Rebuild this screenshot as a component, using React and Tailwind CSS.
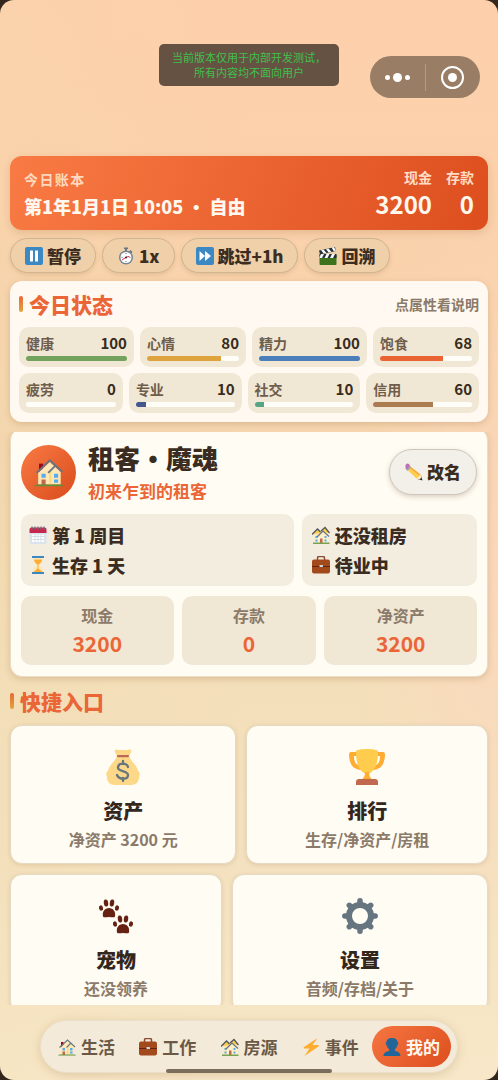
import { useState } from 'react';

const quickStats = [
  [
    { label: '健康', value: 100, color: 'bg-[#72a25b]' },
    { label: '心情', value: 80, color: 'bg-[#dfa33d]' },
    { label: '精力', value: 100, color: 'bg-[#4a7fb9]' },
    { label: '饱食', value: 68, color: 'bg-[#ea6332]' },
  ],
  [
    { label: '疲劳', value: 0, color: 'bg-[#8a7a68]' },
    { label: '专业', value: 10, color: 'bg-[#43588c]' },
    { label: '社交', value: 10, color: 'bg-[#55a583]' },
    { label: '信用', value: 60, color: 'bg-[#ab7c50]' },
  ],
];

const money = [
  { label: '现金', value: 3200 },
  { label: '存款', value: 0 },
  { label: '净资产', value: 3200 },
];

const entries = [
  [
    { icon: MoneyBag, title: '资产', note: '净资产 3200 元' },
    { icon: Trophy, title: '排行', note: '生存/净资产/房租' },
  ],
  [
    { icon: Paws, title: '宠物', note: '还没领养' },
    { icon: Gear, title: '设置', note: '音频/存档/关于' },
  ],
];

const tabs = [
  { icon: House, label: '生活' },
  { icon: Briefcase, label: '工作' },
  { icon: Houses, label: '房源' },
  { icon: Bolt, label: '事件' },
  { icon: Person, label: '我的' },
];

function Icon({ className = 'size-[18px]', children }) {
  return (
    <svg viewBox="0 0 36 36" className={`shrink-0 ${className}`} aria-hidden="true">
      {children}
    </svg>
  );
}

function Pause(props) {
  return (
    <Icon {...props}>
      <rect x="0" y="0" width="36" height="36" rx="4" fill="#3b88c3" />
      <rect x="10" y="7" width="6" height="22" rx="1" fill="#fff" />
      <rect x="20" y="7" width="6" height="22" rx="1" fill="#fff" />
    </Icon>
  );
}

function Forward(props) {
  return (
    <Icon {...props}>
      <rect x="0" y="0" width="36" height="36" rx="4" fill="#3b88c3" />
      <path d="M7 8l11 10L7 28zM18 8l12 10-12 10z" fill="#fff" />
    </Icon>
  );
}

function Stopwatch(props) {
  return (
    <Icon {...props}>
      <path d="M14 1h8v3h-2v4h-4V4h-2z" fill="#66757f" />
      <path d="M27 6l4 4-3 3-4-4z" fill="#66757f" />
      <circle cx="18" cy="21" r="14" fill="#758592" />
      <circle cx="18" cy="21" r="11" fill="#fff" />
      <path d="M18 12v2M18 28v2M9 21h2M25 21h2" stroke="#66757f" strokeWidth="2" />
      <path d="M10 26l9-6 6-1" fill="none" stroke="#dd2e44" strokeWidth="2" />
      <circle cx="18" cy="21" r="2" fill="#292f33" />
    </Icon>
  );
}

function Clapper(props) {
  return (
    <Icon {...props}>
      <path d="M1 16h34v18a2 2 0 0 1-2 2H3a2 2 0 0 1-2-2z" fill="#3e721d" />
      <path d="M1 14h34v8H1zM0 7L32 0l2 8L2 15z" fill="#292f33" />
      <path d="M4 14h6l-4 8H1v-2zM15 14h6l-4 8h-6zM26 14h6l-4 8h-6zM4 6l5-1 6 7-6 1zM14 4l5-1 6 7-6 1zM25 1l5-1 4 7-4 2z" fill="#f5f8fa" />
    </Icon>
  );
}

function House(props) {
  return (
    <Icon {...props}>
      <path d="M6 8h5v10H6z" fill="#a0041e" />
      <path d="M19 6L5 19v14h27V18z" fill="#ffe8b6" />
      <path d="M18 20v13h3V17z" fill="#ffd983" />
      <path d="M3 19L19 4l15 14" fill="none" stroke="#66757f" strokeWidth="2.2" />
      <path d="M17 19l9-9" fill="none" stroke="#66757f" strokeWidth="2.2" />
      <path d="M9 20h5v5H9zM24 20h5v5h-5zM24 27h5v4h-5z" fill="#55acee" />
      <path d="M9 27h5v7H9z" fill="#c1694f" />
      <path d="M0 35q1-2 4-2h28q3 0 4 2z" fill="#5c913b" />
    </Icon>
  );
}

function Houses(props) {
  return (
    <Icon {...props}>
      <path d="M5 13h13v18H5zM21 10h11v12H21z" fill="#ffe8b6" />
      <path d="M2 16l9-10 9 8zM18 12l8-9 9 11z" fill="#ffcc4d" />
      <path d="M0 17L11 6l6 6M18 10l8-7 9 11" fill="none" stroke="#4c565e" strokeWidth="2.5" />
      <path d="M7 20h4v4H7zM7 27h4v4H7z" fill="#55acee" />
      <path d="M22 11L12 21v13h21V20z" fill="#fff0c9" />
      <path d="M10 22l12-12 12 11" fill="none" stroke="#66757f" strokeWidth="2.5" />
      <path d="M25 20h4v4h-4zM25 27h4v4h-4z" fill="#55acee" />
      <path d="M16 25h5v9h-5z" fill="#c1694f" />
      <path d="M2 33h33v3H2z" fill="#77a353" />
    </Icon>
  );
}

function Briefcase(props) {
  return (
    <Icon {...props}>
      <path d="M11 8V4a3 3 0 0 1 3-3h8a3 3 0 0 1 3 3v4" fill="none" stroke="#8a4b38" strokeWidth="3" />
      <rect x="0" y="7" width="36" height="28" rx="4" fill="#a34a1c" />
      <path d="M0 20h36v2H0z" fill="#662113" />
      <rect x="15" y="18" width="7" height="4" rx="1" fill="#ccd6dd" />
    </Icon>
  );
}

function Bolt(props) {
  return (
    <Icon {...props}>
      <path d="M31 0L4 18c-1 1-1 3 1 3h10L5 36l28-19c1-1 1-3-1-3H21z" fill="#ffac33" />
    </Icon>
  );
}

function Person(props) {
  return (
    <Icon {...props}>
      <path d="M24 26v-4c3-2 4-5 5-8 2-1 2-5 0-6 0-5-5-8-11-8S7 3 7 8c-2 1-2 5 0 6 1 3 2 6 5 8v4c-6 1-11 4-11 10h34c0-6-5-9-11-10z" fill="#226699" />
    </Icon>
  );
}

function Calendar(props) {
  return (
    <Icon {...props}>
      <path d="M1 11h34v21a4 4 0 0 1-4 4H5a4 4 0 0 1-4-4z" fill="#dbe4ec" />
      <path d="M5 3h26a4 4 0 0 1 4 4v7H1V7a4 4 0 0 1 4-4z" fill="#c5284c" />
      <path d="M6 17h24v15H6z" fill="#fff" />
      <path d="M12 16v17M18 16v17M24 16v17M5 21h26M5 27h26" stroke="#ccd6dd" strokeWidth="1.5" />
      <path d="M6 1v6M12 1v6M18 1v6M24 1v6M30 1v6" stroke="#66757f" strokeWidth="2.5" />
    </Icon>
  );
}

function Hourglass(props) {
  return (
    <Icon {...props}>
      <path d="M8 3h20c0 9-3 12-8 15 5 3 8 6 8 15H8c0-9 3-12 8-15C11 15 8 12 8 3z" fill="#ffe8b6" />
      <path d="M10 7h16c-1 6-4 8-7 10v8l8 7H9l8-7v-8c-3-2-6-4-7-10z" fill="#ffac33" />
      <path d="M6 0h24v4H6zM6 32h24v4H6z" fill="#3b88c3" />
    </Icon>
  );
}

function Pencil(props) {
  return (
    <Icon {...props}>
      <path d="M35 35l-3-10-7 7z" fill="#292f33" />
      <path d="M33 29l-3-7-8 8 7 3z" fill="#ffe8b6" />
      <path d="M9 6l22 17-8 8L3 12z" fill="#ffcc4d" />
      <path d="M9 6l22 17-2 2L7 8z" fill="#f4a93a" />
      <path d="M8 4l4 5-7 7-4-5z" fill="#99aab5" />
      <path d="M1 7c-1-4 3-8 7-5l2 4-7 7-2-3z" fill="#bf6fb5" />
    </Icon>
  );
}

function MoneyBag(props) {
  return (
    <Icon {...props}>
      <path d="M12 7c-1-2-3-4-2-6 1-1 3 0 4 0h8c1 0 3-1 4 0 1 2-1 4-2 6z" fill="#fdd888" />
      <path d="M12 7h12c2 6 8 9 9 15 2 1 2 4 1 6 0 5-3 8-8 8H10c-5 0-8-3-8-8-1-2-1-5 1-6 1-6 7-9 9-15z" fill="#fdd888" />
      <rect x="12" y="6" width="12" height="2.2" rx="1" fill="#bf6952" />
      <path d="M23 18c-1-4-9-5-10 0-1 5 10 3 10 8 0 5-9 5-11 0M18 12v3M18 29v3" fill="none" stroke="#67757f" strokeWidth="2.3" strokeLinecap="round" />
    </Icon>
  );
}

function Trophy(props) {
  return (
    <Icon {...props}>
      <path d="M8 3H2C0 3 0 5 0 7c1 8 3 13 12 14v-4c-6-1-7-5-7-10h4zM28 3h6c2 0 2 2 2 4-1 8-3 13-12 14v-4c6-1 7-5 7-10h-4z" fill="#ffac33" />
      <path d="M7 2c0-1 5-2 11-2s11 1 11 2c0 13-3 19-8 22h-6C10 21 7 15 7 2z" fill="#ffcc4d" />
      <path d="M16 23h4c0 4 1 6 4 8H12c3-2 4-4 4-8z" fill="#ffac33" />
      <path d="M10 30h16a3 3 0 0 1 3 3v3H7v-3a3 3 0 0 1 3-3z" fill="#c1694f" />
    </Icon>
  );
}

function Paw() {
  return (
    <>
      <ellipse cx="2" cy="9" rx="2" ry="2.7" transform="rotate(-15 2 9)" />
      <ellipse cx="7" cy="4" rx="2.2" ry="3.6" transform="rotate(-8 7 4)" />
      <ellipse cx="13" cy="4" rx="2.2" ry="3.6" transform="rotate(8 13 4)" />
      <ellipse cx="18" cy="9" rx="2" ry="2.7" transform="rotate(15 18 9)" />
      <path d="M4 17.500c-1-5 2-8.500 6-8.500s7 3.500 6 8.500c-1 1.500-3 .5-6 .5s-5 1-6-.5z" />
    </>
  );
}

function Paws(props) {
  return (
    <Icon {...props}>
      <g fill="#662113">
        <g transform="translate(1 1)"><Paw /></g>
        <g transform="translate(15 17)"><Paw /></g>
      </g>
    </Icon>
  );
}

function Gear(props) {
  return (
    <Icon {...props}>
      <g stroke="#66757f" strokeWidth="5.5" strokeLinecap="round">
        <path d="M18 2.800v4M18 29.200v4M2.800 18h4M29.200 18h4" />
        <path d="M7.300 7.300l2 2M26.700 26.700l2 2M28.700 7.300l-2 2M9.300 26.700l-2 2" />
      </g>
      <circle cx="18" cy="18" r="11" fill="none" stroke="#66757f" strokeWidth="6" />
    </Icon>
  );
}

function SectionTitle({ children }) {
  return (
    <h2 className="flex items-center gap-[6px] text-[21px] leading-7 font-black text-[#ea6637]">
      <span className="h-4 w-1 rounded-sm bg-linear-to-b from-[#ea6637] to-[#dfa33d]" />
      {children}
    </h2>
  );
}

function Stat({ label, value, color }) {
  return (
    <button className="flex-auto rounded-[10px] bg-[#f1e7d5] px-[7px] py-[6px]">
      <span className="flex items-center justify-between leading-5 font-bold">
        <span className="text-sm text-[#6e5d4b]">{label}</span>
        <span className="text-[15px] text-[#372b20]">{value}</span>
      </span>
      <span className="mt-[3px] block h-[5px] overflow-hidden rounded-full bg-[#fffdf8]">
        <span className={`block h-full ${color}`} style={{ width: `${value}%` }} />
      </span>
    </button>
  );
}

function Pill({ icon: PillIcon, children }) {
  return (
    <button className="flex h-[35px] items-center gap-1 rounded-full border border-[#cfb491] bg-[#efd0a9] px-[14px] text-[17px] font-black text-[#3c2d20] shadow-[0_2px_4px_rgba(150,100,50,0.18)]">
      <PillIcon />
      {children}
    </button>
  );
}

export default function App() {
  const [active, setActive] = useState('我的');

  return (
    <div className="h-screen bg-[#33261d] font-['Noto_Sans_CJK_SC',sans-serif]">
      <div className="relative flex h-full flex-col overflow-hidden rounded-[14px] bg-[radial-gradient(ellipse_30%_35%_at_100%_52%,rgba(255,214,190,0.7),rgba(255,214,190,0)),linear-gradient(90deg,rgba(240,218,172,0.2),rgba(245,222,180,0)_50%),linear-gradient(180deg,#fdd0ab_0%,#fbd1ab_18%,#f4d6ae_42%,#f3dfba_64%,#f4e1bf_80%,#f8e8c9_100%)]">
        {/* Top bar */}
        <div className="grid grid-cols-[1fr_180px_1fr] items-start pt-11 pb-[58px]">
          <p className="col-start-2 rounded-[5px] bg-[#655243] px-2 py-[6px] text-center text-[11px] leading-[15px] text-[#3fc04b]">
            当前版本仅用于内部开发测试，<br />所有内容均不面向用户
          </p>
          <div className="mt-3 mr-[18px] flex h-[42px] w-[110px] items-center justify-self-end rounded-full bg-[#997d65]">
            <button aria-label="更多" className="flex flex-1 items-center justify-center gap-[3px]">
              <span className="size-[5px] rounded-full bg-white" />
              <span className="size-[9px] rounded-full bg-white" />
              <span className="size-[5px] rounded-full bg-white" />
            </button>
            <span className="h-[27px] w-px bg-[#b39c88]" />
            <button aria-label="关闭" className="flex flex-1 justify-center">
              <span className="flex size-[23px] items-center justify-center rounded-full border-2 border-white">
                <span className="size-[9px] rounded-full bg-white" />
              </span>
            </button>
          </div>
        </div>

        {/* Ledger */}
        <header className="mx-[10px] flex items-center justify-between rounded-xl bg-linear-[110deg] from-[#f97a44] to-[#dd4e1e] px-[14px] py-[10px] font-bold text-[#fff8ee] shadow-[0_3px_8px_rgba(150,90,40,0.2)]">
          <div>
            <p className="text-sm leading-[26px] tracking-widest text-[#ffd9bf]">今日账本</p>
            <p className="text-lg leading-7 font-black">第1年1月1日 10:05 · 自由</p>
          </div>
          <dl className="flex gap-[14px] text-right">
            <div>
              <dt className="text-sm leading-[22px] text-[#ffdcc5]">现金</dt>
              <dd className="text-2xl leading-8">3200</dd>
            </div>
            <div>
              <dt className="text-sm leading-[22px] text-[#ffdcc5]">存款</dt>
              <dd className="text-2xl leading-8">0</dd>
            </div>
          </dl>
        </header>

        <div className="mx-[10px] my-2 flex gap-[6px]">
          <Pill icon={Pause}>暂停</Pill>
          <Pill icon={Stopwatch}>1x</Pill>
          <Pill icon={Forward}>跳过+1h</Pill>
          <Pill icon={Clapper}>回溯</Pill>
        </div>

        {/* Today status */}
        <section className="mx-[10px] mb-[10px] rounded-xl bg-[#fff9f1] p-[9px] shadow-[0_2px_6px_rgba(150,100,50,0.25)]">
          <div className="mb-[9px] flex items-center justify-between">
            <SectionTitle>今日状态</SectionTitle>
            <span className="text-sm font-bold text-[#8b7a69]">点属性看说明</span>
          </div>
          <div className="flex flex-col gap-[6px]">
            {quickStats.map((row, index) => (
              <div key={index} className="flex gap-[6px]">
                {row.map((stat) => (
                  <Stat key={stat.label} {...stat} />
                ))}
              </div>
            ))}
          </div>
        </section>

        <main className="min-h-0 flex-1 overflow-hidden px-[10px]">
          {/* Profile */}
          <section className="-mt-1 rounded-xl border border-[#eadcc5] bg-[#fffcf3] px-[10px] pt-[10px] pb-[11px] shadow-[0_2px_6px_rgba(150,100,50,0.25)]">
            <div className="flex items-center">
              <div className="flex size-[55px] items-center justify-center rounded-full bg-linear-[135deg] from-[#f97a45] to-[#d94c1c]">
                <House className="size-[30px]" />
              </div>
              <div className="ml-3 flex-1">
                <h1 className="text-[26px] leading-[37px] font-black text-[#3a2c20]">租客·魔魂</h1>
                <p className="text-[17px] leading-[29px] font-bold text-[#ea6637]">初来乍到的租客</p>
              </div>
              <button className="flex h-[46px] items-center gap-1 rounded-full border border-[#cdc6bd] bg-[#f3f0ea] px-[15px] text-[17px] font-black text-[#3a2c20] shadow-[0_2px_5px_rgba(120,80,50,0.25)]">
                <Pencil />
                改名
              </button>
            </div>

            <div className="mt-[9px] grid grid-cols-[14fr_9fr] gap-2 text-lg leading-[30px] font-black text-[#3a2c20]">
              <div className="rounded-[10px] bg-[#f3ede0] px-2 py-[6px]">
                <p className="flex items-center gap-[5px]"><Calendar />第 1 周目</p>
                <p className="flex items-center gap-[5px]"><Hourglass />生存 1 天</p>
              </div>
              <div className="rounded-[10px] bg-[#f3ede0] px-[10px] py-[6px]">
                <p className="flex items-center gap-[5px]"><Houses />还没租房</p>
                <p className="flex items-center gap-[5px]"><Briefcase />待业中</p>
              </div>
            </div>

            <dl className="mt-[10px] flex gap-2 text-center font-bold">
              {money.map((item) => (
                <div key={item.label} className="flex-auto rounded-[10px] bg-[#f1e7d5] pt-[6px] pb-[7px]">
                  <dt className="text-base leading-[27px] text-[#8b7a69]">{item.label}</dt>
                  <dd className="text-[21px] leading-[29px] text-[#ea6637]">{item.value}</dd>
                </div>
              ))}
            </dl>
          </section>

          {/* Shortcuts */}
          <div className="my-[10px]">
            <SectionTitle>快捷入口</SectionTitle>
          </div>
          <div className="flex flex-col gap-[10px]">
            {entries.map((row, index) => (
              <div key={index} className="flex gap-[10px]">
                {row.map(({ icon: EntryIcon, title, note }) => (
                  <button
                    key={title}
                    className="flex flex-auto flex-col items-center rounded-xl border border-[#e6dac5] bg-[#fffcf3] pt-[23px] pb-[10px] font-bold shadow-[0_1px_4px_rgba(150,110,60,0.2)]"
                  >
                    <EntryIcon className="size-9" />
                    <span className="mt-[11px] text-xl leading-[30px] font-black text-[#33271d]">{title}</span>
                    <span className="text-base leading-[27px] text-[#8b7a69]">{note}</span>
                  </button>
                ))}
              </div>
            ))}
          </div>
        </main>

        {/* Tab bar */}
        <nav className="mx-10 mt-[15px] mb-[7px] flex gap-[2px] rounded-full border border-[#eadfca] bg-[#f4ead9] px-[6px] py-[5px] shadow-[0_2px_10px_rgba(150,110,60,0.25)]">
          {tabs.map(({ icon: TabIcon, label }) => (
            <button
              key={label}
              onClick={() => setActive(label)}
              className={`flex h-[41px] flex-1 items-center justify-center gap-[5px] rounded-full text-[17px] font-bold ${
                active === label
                  ? 'bg-linear-[135deg] from-[#f57641] to-[#dd4e1e] text-[#fff8ee]'
                  : 'text-[#6b5946]'
              }`}
            >
              <TabIcon />
              {label}
            </button>
          ))}
        </nav>
        <span className="absolute bottom-[7px] left-1/3 h-1 w-1/3 rounded-full bg-[#7b6d5b]" />
      </div>
    </div>
  );
}
